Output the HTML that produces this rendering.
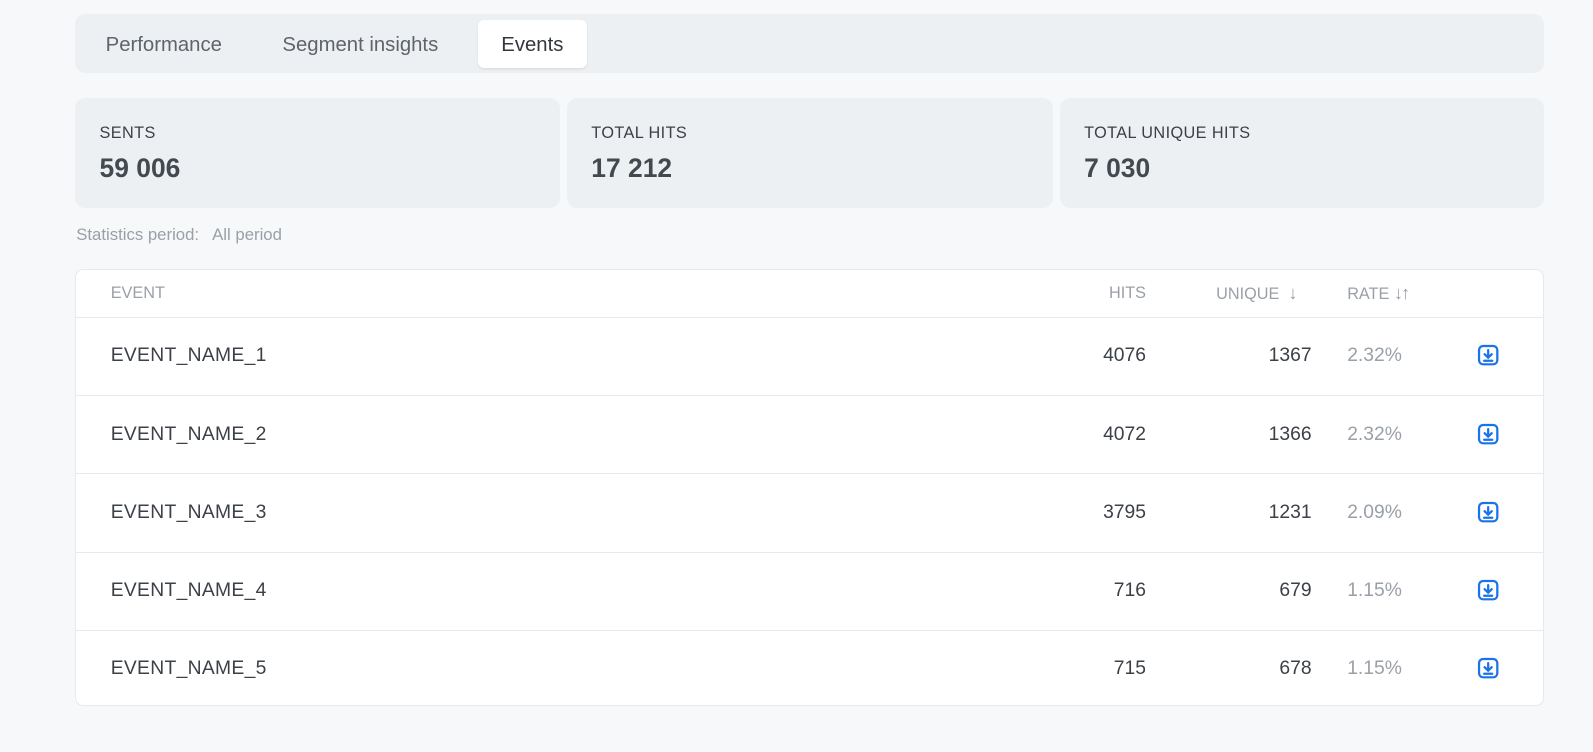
<!DOCTYPE html>
<html><head><meta charset="utf-8"><style>
*{box-sizing:border-box;margin:0;padding:0}
body{width:1593px;height:752px;background:#f7f8fa;font-family:"Liberation Sans",Roboto,sans-serif;color:#3c4047;overflow:hidden}
#w{position:relative;width:1568px;height:740px;zoom:1.016}
.tabs{position:absolute;left:74px;top:14px;width:1446px;height:58px;background:#edf0f3;border-radius:10px}
.tab{position:absolute;top:6px;height:47px;line-height:51px;font-size:20px;color:#5f646b}
.tab.act{background:#fff;border-radius:6px;color:#33373d;box-shadow:0 1px 2px rgba(0,0,0,.08)}
.card{position:absolute;top:96px;height:109px;background:#edf0f3;border-radius:10px}
.card .l{position:absolute;left:24px;top:26px;font-size:16px;letter-spacing:.4px;color:#3c4047}
.card .v{position:absolute;left:24px;top:55px;font-size:26px;font-weight:bold;color:#44484f}
.stat{position:absolute;left:75px;top:221px;font-size:16.5px;color:#9aa0a8}
.tbl{position:absolute;left:74px;top:265px;width:1446px;height:430px;background:#fff;border:1px solid #e6e9ee;border-radius:8px}
.row{position:absolute;left:0;width:1444px;border-top:1px solid #e6e9ee}
.c{position:absolute;font-size:19px;line-height:20px}
.h{font-size:16px;color:#9aa0a8}
.r{text-align:right}
.ic{position:absolute;left:1379px;width:22px;height:22px}
</style></head><body><div id="w">
<div class="tabs">
<div class="tab" style="left:30px">Performance</div>
<div class="tab" style="left:204px">Segment insights</div>
<div class="tab act" style="left:396px;width:108px;text-align:center">Events</div>
</div>
<div class="card" style="left:74px;width:477px"><div class="l">SENTS</div><div class="v">59 006</div></div>
<div class="card" style="left:558px;width:478px"><div class="l">TOTAL HITS</div><div class="v">17 212</div></div>
<div class="card" style="left:1043px;width:477px"><div class="l">TOTAL UNIQUE HITS</div><div class="v">7 030</div></div>
<div class="stat">Statistics period:&nbsp;&nbsp; All period</div>
<div class="tbl">
<div class="c h" style="left:34px;top:13px">EVENT</div>
<div class="c h r" style="left:953px;width:100px;top:13px">HITS</div>
<div class="c h" style="left:1122px;top:13px">UNIQUE &nbsp;<span style="font-size:18px">↓</span></div>
<div class="c h" style="left:1251px;top:13px">RATE <span style="font-size:18px;letter-spacing:-2px">↓↑</span></div>
<div id="rows"></div>
</div>
</div>
<script>
var d=[["EVENT_NAME_1",4076,1367,"2.32%"],["EVENT_NAME_2",4072,1366,"2.32%"],["EVENT_NAME_3",3795,1231,"2.09%"],["EVENT_NAME_4",716,679,"1.15%"],["EVENT_NAME_5",715,678,"1.15%"]];
var h="";d.forEach(function(r,i){var t=46+i*77;var y=t+76/2-10;
h+='<div class="row" style="top:'+t+'px"></div>';
h+='<div class="c" style="left:34px;top:'+(y+1)+'px;letter-spacing:.3px">'+r[0]+'</div>';
h+='<div class="c r" style="left:953px;width:100px;top:'+(y+1)+'px">'+r[1]+'</div>';
h+='<div class="c r" style="left:1116px;width:100px;top:'+(y+1)+'px">'+r[2]+'</div>';
h+='<div class="c" style="left:1251px;top:'+(y+1)+'px;color:#9aa0a8">'+r[3]+'</div>';
h+='<svg class="ic" style="top:'+(y-1)+'px" viewBox="0 0 22 22" fill="none" stroke="#1a73e8" stroke-width="2.2" stroke-linecap="round"><rect x="2" y="2" width="18" height="18" rx="4"/><path d="M11 6v7M7.5 10l3.5 3.5 3.5-3.5M7 16.5h8"/></svg>';
});document.getElementById("rows").innerHTML=h;
</script>
</body></html>
